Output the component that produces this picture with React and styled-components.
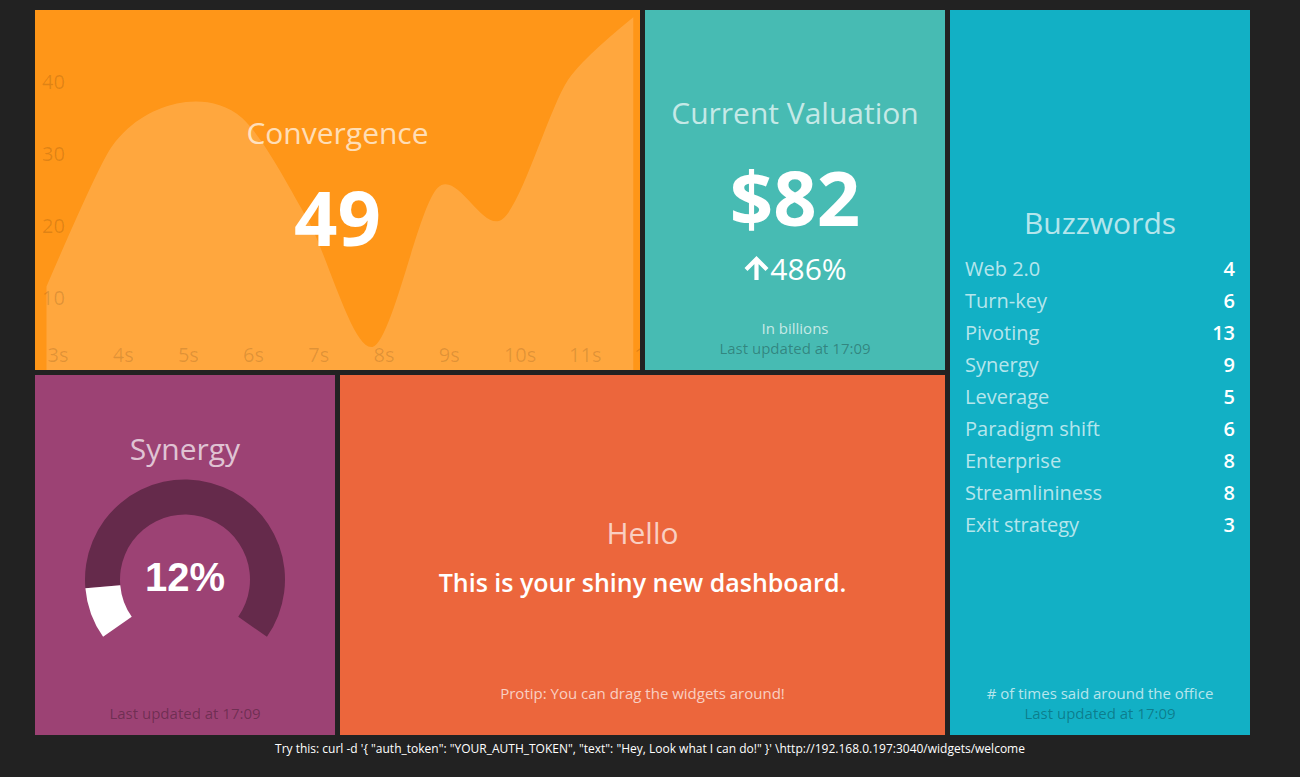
import React from "react";
import styled, { createGlobalStyle } from "styled-components";

const GlobalStyle = createGlobalStyle`
    html, body {
        margin: 0;
        padding: 0;
        background-color: #222222;
    }
    body {
        font-family: "Open Sans", "Liberation Sans", sans-serif;
        font-size: 20px;
        color: #ffffff;
    }
    h1, h2, h3, p, ul, li {
        margin: 0;
        padding: 0;
    }
`;

const Page = styled.div`
    width: 1300px;
    min-height: 777px;
    padding: 10px 0 0 35px;
    box-sizing: border-box;
`;

const Grid = styled.div`
    display: grid;
    grid-template-columns: repeat(4, 300px);
    grid-template-rows: 360px 360px;
    gap: 5px;
`;

const Widget = styled.div`
    grid-column: ${(p) => p.$col};
    grid-row: ${(p) => p.$row};
    background-color: ${(p) => p.$bg};
    position: relative;
    overflow: hidden;
    display: grid;
    grid-template-rows: 1fr auto 1fr;
    padding: 0 12px;
    text-align: center;
`;

const Content = styled.div`
    grid-row: 2;
    position: relative;
    z-index: 2;
`;

const Footer = styled.div`
    grid-row: 3;
    align-self: end;
    padding-bottom: ${(p) => p.$pad || 12}px;
`;

const Title = styled.h1`
    font-size: 30px;
    font-weight: 400;
    color: rgba(255, 255, 255, 0.7);
    margin-bottom: 12px;
`;

const Value = styled.h2`
    font-size: 76px;
    font-weight: 700;
    color: #ffffff;
`;

const ChangeRate = styled.p`
    font-size: 30px;
    font-weight: 400;
    color: #ffffff;
    display: flex;
    justify-content: center;
    align-items: center;
`;

const Arrow = styled.svg`
    width: 27px;
    height: 26px;
    margin-top: -1px;
`;

const Message = styled.h3`
    font-size: 25px;
    font-weight: 600;
    color: #ffffff;
`;

const MoreInfo = styled.p`
    font-size: 15px;
    color: rgba(255, 255, 255, 0.7);
`;

const UpdatedAt = styled.p`
    font-size: 15px;
    color: rgba(0, 0, 0, 0.3);
`;

const ChartSvg = styled.svg`
    position: absolute;
    left: 0;
    top: 0;
    z-index: 1;
`;

const TickText = styled.text`
    font-family: "Open Sans", "Liberation Sans", sans-serif;
    font-size: 20px;
    fill: rgba(0, 0, 0, 0.13);
`;

const GaugeWrap = styled.div`
    position: relative;
    width: 200px;
    height: 202px;
    margin: 0 auto;

    svg {
        display: block;
        overflow: visible;
    }
`;

const GaugeValue = styled.span`
    position: absolute;
    left: 0;
    right: 0;
    top: 96px;
    transform: translateY(-50%);
    font-family: "Liberation Sans", Arial, sans-serif;
    font-size: 40px;
    font-weight: 700;
    color: #ffffff;
    line-height: 1;
`;

const List = styled.ul`
    list-style: none;
    padding: 0 3px;
    text-align: left;
`;

const Item = styled.li`
    display: flex;
    justify-content: space-between;
    margin-bottom: 5px;
`;

const Label = styled.span`
    color: rgba(255, 255, 255, 0.7);
`;

const Count = styled.span`
    font-weight: 600;
    color: #ffffff;
`;

const Hint = styled.div`
    padding-top: 5px;
    text-align: center;
    font-size: 12px;
    color: #ffffff;
    margin-left: -35px;
`;

const seconds = [3, 4, 5, 6, 7, 8, 9, 10, 11, 12];
const series = [11.6, 31, 37, 35, 21, 3.2, 25.3, 21, 40.3, 49];

const cardinal = (pts, tension = 0.7) => {
    const a = (1 - tension) / 2;
    const n = pts.length;
    const t = [];
    for (let i = 1; i < n - 1; i++) {
        t.push([a * (pts[i + 1][0] - pts[i - 1][0]), a * (pts[i + 1][1] - pts[i - 1][1])]);
    }
    const p1 = pts[1];
    let d = `M${pts[0][0]},${pts[0][1]}`;
    d += `Q${p1[0] - (t[0][0] * 2) / 3},${p1[1] - (t[0][1] * 2) / 3},${p1[0]},${p1[1]}`;
    for (let i = 2; i < n - 1; i++) {
        const p0 = pts[i - 1];
        const t0 = t[i - 2];
        const p = pts[i];
        const ti = t[i - 1];
        d += `C${p0[0] + t0[0]},${p0[1] + t0[1]},${p[0] - ti[0]},${p[1] - ti[1]},${p[0]},${p[1]}`;
    }
    const pl = pts[n - 2];
    const tl = t[n - 3];
    const last = pts[n - 1];
    d += `Q${pl[0] + (tl[0] * 2) / 3},${pl[1] + (tl[1] * 2) / 3},${last[0]},${last[1]}`;
    return d;
};

const AreaChart = () => {
    const pts = series.map((v, i) => [11.5 + 65.2 * i, 360 - 7.2 * v]);
    const first = pts[0];
    const last = pts[pts.length - 1];
    const area = `${cardinal(pts)}L${last[0]},360L${first[0]},360Z`;

    return (
        <ChartSvg width="605" height="360" viewBox="0 0 605 360">
            <path d={area} fill="rgba(255,255,255,0.17)" />
            {[10, 20, 30, 40].map((v) => (
                <TickText key={v} x="7" y={360 - 7.2 * v} dy="0.35em">
                    {v}
                </TickText>
            ))}
            {seconds.map((s, i) => (
                <TickText key={s} x={12.5 + 65.2 * i} y="352">
                    {s}s
                </TickText>
            ))}
        </ChartSvg>
    );
};

const polar = (cx, cy, r, deg) => {
    const rad = (deg * Math.PI) / 180;
    return [cx + r * Math.sin(rad), cy - r * Math.cos(rad)];
};

const ring = (cx, cy, ro, ri, a0, a1) => {
    const large = a1 - a0 > 180 ? 1 : 0;
    const [x0, y0] = polar(cx, cy, ro, a0);
    const [x1, y1] = polar(cx, cy, ro, a1);
    const [x2, y2] = polar(cx, cy, ri, a1);
    const [x3, y3] = polar(cx, cy, ri, a0);
    return `M${x0},${y0}A${ro},${ro} 0 ${large} 1 ${x1},${y1}L${x2},${y2}A${ri},${ri} 0 ${large} 0 ${x3},${y3}Z`;
};

const Gauge = ({ value }) => {
    const end = -125 + (250 * value) / 100;
    return (
        <GaugeWrap>
            <svg width="200" height="202" viewBox="0 0 200 202">
                <path d={ring(100, 98.5, 100, 65, end, 125)} fill="#652a4b" />
                <path d={ring(100, 98.5, 100, 65, -125, end)} fill="#ffffff" />
            </svg>
            <GaugeValue>{value}%</GaugeValue>
        </GaugeWrap>
    );
};

const buzzwords = [
    ["Web 2.0", 4],
    ["Turn-key", 6],
    ["Pivoting", 13],
    ["Synergy", 9],
    ["Leverage", 5],
    ["Paradigm shift", 6],
    ["Enterprise", 8],
    ["Streamlininess", 8],
    ["Exit strategy", 3],
];

const App = () => {
    return (
        <Page>
            <GlobalStyle />
            <Grid>
                <Widget $bg="#ff9618" $col="1 / 3" $row="1">
                    <AreaChart />
                    <Content>
                        <Title>Convergence</Title>
                        <Value>49</Value>
                    </Content>
                </Widget>

                <Widget $bg="#47bbb3" $col="3" $row="1">
                    <Content>
                        <Title>Current Valuation</Title>
                        <Value>$82</Value>
                        <ChangeRate>
                            <Arrow viewBox="0 0 27 26">
                                <path
                                    d="M13.5 25V4M3 14.5L13.5 4L24 14.5"
                                    fill="none"
                                    stroke="#ffffff"
                                    strokeWidth="4.2"
                                />
                            </Arrow>
                            <span>486%</span>
                        </ChangeRate>
                    </Content>
                    <Footer>
                        <MoreInfo>In billions</MoreInfo>
                        <UpdatedAt>Last updated at 17:09</UpdatedAt>
                    </Footer>
                </Widget>

                <Widget $bg="#12b0c5" $col="4" $row="1 / 3">
                    <Content>
                        <Title>Buzzwords</Title>
                        <List>
                            {buzzwords.map(([label, count]) => (
                                <Item key={label}>
                                    <Label>{label}</Label>
                                    <Count>{count}</Count>
                                </Item>
                            ))}
                        </List>
                    </Content>
                    <Footer>
                        <MoreInfo># of times said around the office</MoreInfo>
                        <UpdatedAt>Last updated at 17:09</UpdatedAt>
                    </Footer>
                </Widget>

                <Widget $bg="#9c4274" $col="1" $row="2">
                    <Content>
                        <Title>Synergy</Title>
                        <Gauge value={12} />
                    </Content>
                    <Footer>
                        <UpdatedAt>Last updated at 17:09</UpdatedAt>
                    </Footer>
                </Widget>

                <Widget $bg="#ec663c" $col="2 / 4" $row="2">
                    <Content>
                        <Title>Hello</Title>
                        <Message>This is your shiny new dashboard.</Message>
                    </Content>
                    <Footer $pad={32}>
                        <MoreInfo>Protip: You can drag the widgets around!</MoreInfo>
                    </Footer>
                </Widget>
            </Grid>
            <Hint>
                Try this: curl -d '{"{"} "auth_token": "YOUR_AUTH_TOKEN", "text": "Hey, Look what I can do!" {"}"}' \http://192.168.0.197:3040/widgets/welcome
            </Hint>
        </Page>
    );
};

export default App;
